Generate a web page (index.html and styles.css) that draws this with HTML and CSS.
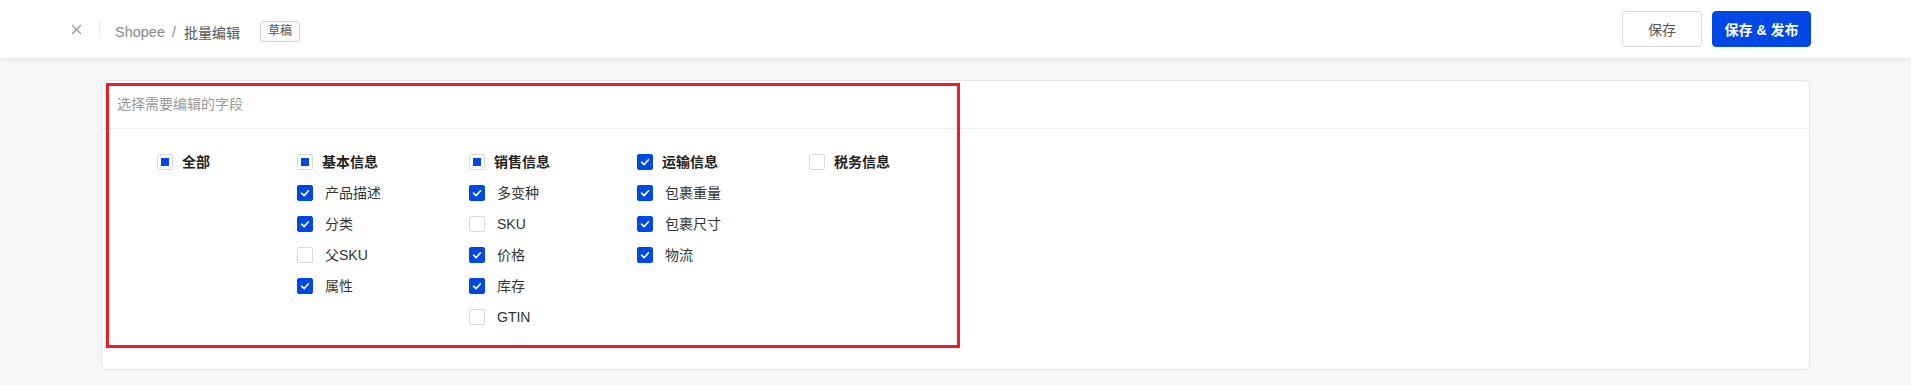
FILE: index.html
```html
<!DOCTYPE html>
<html lang="zh">
<head>
    <meta charset="UTF-8">
    <meta name="viewport" content="width=device-width, initial-scale=1.0">
    <title>批量编辑</title>
    <link rel="stylesheet" href="styles.css">
</head>
<body>
    <header class="top-bar">
        <div class="top-left">
            <span class="close-btn">
                <svg width="11" height="11" viewBox="0 0 11 11"><path d="M1 1L10 10M10 1L1 10" stroke="#999" stroke-width="1.2" fill="none"/></svg>
            </span>
            <span class="top-divider"></span>
            <div class="crumbs">
                <span class="crumb">Shopee</span>
                <span class="crumb-sep">/</span>
                <span class="crumb-current">批量编辑</span>
                <span class="draft-tag">草稿</span>
            </div>
        </div>
        <div class="top-right">
            <button class="btn">保存</button>
            <button class="btn btn-primary">保存 &amp; 发布</button>
        </div>
    </header>

    <main class="main">
        <section class="card">
            <div class="card-head">选择需要编辑的字段</div>
            <div class="field-grid">
                <div class="field-col col-all">
                    <label class="check head"><span class="box half"></span>全部</label>
                </div>
                <div class="field-col col-basic">
                    <label class="check head"><span class="box half"></span>基本信息</label>
                    <label class="check on"><span class="box"><svg viewBox="0 0 16 16"><path d="M4 8.2L7 11L12 5.5"/></svg></span>产品描述</label>
                    <label class="check on"><span class="box"><svg viewBox="0 0 16 16"><path d="M4 8.2L7 11L12 5.5"/></svg></span>分类</label>
                    <label class="check"><span class="box"></span>父SKU</label>
                    <label class="check on"><span class="box"><svg viewBox="0 0 16 16"><path d="M4 8.2L7 11L12 5.5"/></svg></span>属性</label>
                </div>
                <div class="field-col col-sale">
                    <label class="check head"><span class="box half"></span>销售信息</label>
                    <label class="check on"><span class="box"><svg viewBox="0 0 16 16"><path d="M4 8.2L7 11L12 5.5"/></svg></span>多变种</label>
                    <label class="check"><span class="box"></span>SKU</label>
                    <label class="check on"><span class="box"><svg viewBox="0 0 16 16"><path d="M4 8.2L7 11L12 5.5"/></svg></span>价格</label>
                    <label class="check on"><span class="box"><svg viewBox="0 0 16 16"><path d="M4 8.2L7 11L12 5.5"/></svg></span>库存</label>
                    <label class="check"><span class="box"></span>GTIN</label>
                </div>
                <div class="field-col col-ship">
                    <label class="check head on"><span class="box"><svg viewBox="0 0 16 16"><path d="M4 8.2L7 11L12 5.5"/></svg></span>运输信息</label>
                    <label class="check on"><span class="box"><svg viewBox="0 0 16 16"><path d="M4 8.2L7 11L12 5.5"/></svg></span>包裹重量</label>
                    <label class="check on"><span class="box"><svg viewBox="0 0 16 16"><path d="M4 8.2L7 11L12 5.5"/></svg></span>包裹尺寸</label>
                    <label class="check on"><span class="box"><svg viewBox="0 0 16 16"><path d="M4 8.2L7 11L12 5.5"/></svg></span>物流</label>
                </div>
                <div class="field-col col-tax">
                    <label class="check head"><span class="box"></span>税务信息</label>
                </div>
            </div>
            <div class="mark-frame"></div>
        </section>
    </main>
</body>
</html>
```

FILE: styles.css
```css
body {
    margin: 0;
    background-color: #f6f7f9;
    font-family: "Liberation Sans", "Noto Sans CJK SC", sans-serif;
    font-size: 14px;
    color: #333;
}
.top-bar {
    height: 58px;
    background-color: #fff;
    box-shadow: 0 2px 6px rgba(0, 0, 0, 0.07);
    display: flex;
    align-items: center;
    justify-content: space-between;
    padding: 0 100px 0 70px;
    position: relative;
}
.top-left {
    display: flex;
    align-items: center;
}
.close-btn {
    display: flex;
    width: 12px;
    height: 12px;
    align-items: center;
    justify-content: center;
}
.top-divider {
    width: 1px;
    height: 20px;
    background-color: #ececec;
    margin: 0 15px 0 17px;
}
.crumbs {
    display: flex;
    align-items: center;
    padding-top: 5px;
}
.crumb {
    color: #888;
    font-size: 14.5px;
}
.crumb-sep {
    color: #888;
    margin: 0 8px 0 7px;
}
.crumb-current {
    color: #555;
}
.draft-tag {
    margin-left: 20px;
    height: 19px;
    line-height: 19px;
    padding: 0 7px;
    border: 1px solid #d6d6d6;
    border-radius: 3px;
    background-color: #fafafa;
    font-size: 12px;
    color: #555;
}
.top-right {
    display: flex;
    gap: 10px;
}
.btn {
    height: 36px;
    width: 80px;
    border: 1px solid #d9d9d9;
    border-radius: 4px;
    background-color: #fff;
    color: #555;
    font-family: inherit;
    font-size: 14px;
    padding: 0;
}
.btn-primary {
    width: 99px;
    border-color: #0048e3;
    background-color: #0048e3;
    color: #fff;
    font-weight: bold;
}
.main {
    padding: 22px 101px 15px;
}
.card {
    position: relative;
    height: 288px;
    background-color: #fff;
    border: 1px solid #e4e5e7;
    border-radius: 6px;
}
.card-head {
    height: 47px;
    line-height: 47px;
    padding-left: 15px;
    color: #999;
    border-bottom: 1px solid #ececec;
}
.field-grid {
    display: grid;
    grid-template-columns: 140px 172px 168px 172px auto;
    padding: 25px 55px 0;
}
.field-col {
    display: flex;
    flex-direction: column;
    gap: 15px;
}
.check {
    display: flex;
    align-items: center;
    height: 16px;
    line-height: 16px;
    color: #333;
}
.check .box {
    flex: none;
    width: 14px;
    height: 14px;
    border: 1px solid #d9d9d9;
    border-radius: 2px;
    background-color: #fff;
    margin-right: 12px;
    display: flex;
    align-items: center;
    justify-content: center;
}
.check.head {
    font-weight: bold;
    color: #222;
}
.check.head .box {
    margin-right: 9px;
}
.check.on .box {
    border-color: #0048e3;
    background-color: #0048e3;
}
.check .box svg {
    width: 16px;
    height: 16px;
}
.check .box svg path {
    fill: none;
    stroke: #fff;
    stroke-width: 1.8;
    stroke-linecap: round;
    stroke-linejoin: round;
}
.check .box.half::after {
    content: "";
    width: 8px;
    height: 8px;
    background-color: #0048e3;
}
.mark-frame {
    position: absolute;
    left: 4px;
    top: 2px;
    width: 854px;
    height: 265px;
    border: 3px solid #ee1c28;
    box-sizing: border-box;
    pointer-events: none;
}
```
